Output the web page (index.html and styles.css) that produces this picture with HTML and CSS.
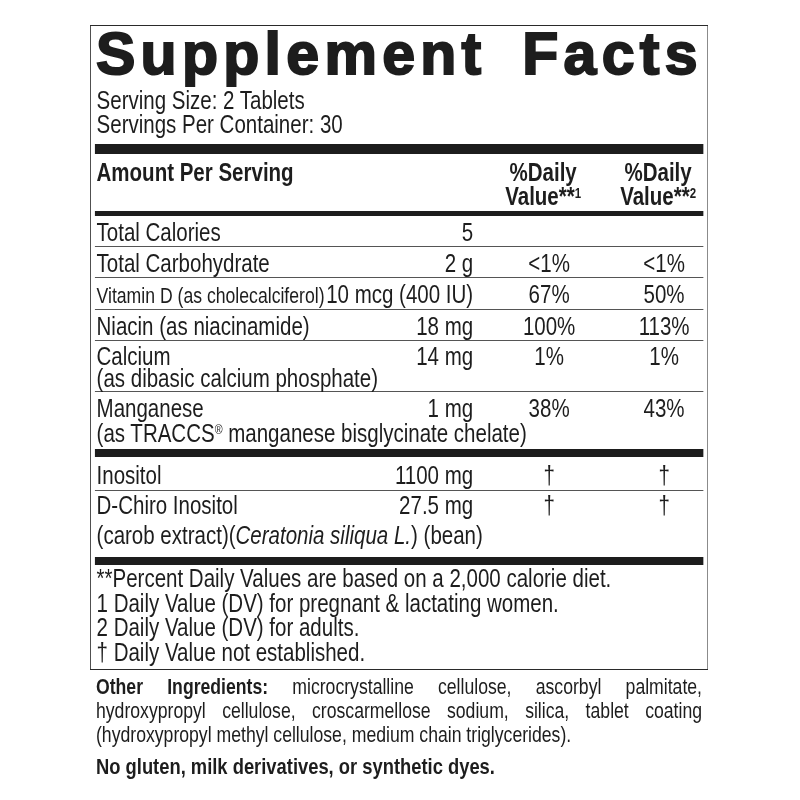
FILE: index.html
```html
<!DOCTYPE html>
<html lang="en">
<head>
<meta charset="utf-8">
<title>Supplement Facts</title>
<link rel="stylesheet" href="styles.css">
</head>
<body>
<div class="label">
  <div class="narrow">
    <div class="facts">
      <h1 class="title">Supplement Facts</h1>
      <div class="serving">Serving Size: 2 Tablets</div>
      <div class="serving">Servings Per Container: 30</div>
      <div class="bar bar-10"></div>
      <div class="row head">
        <div class="name">Amount Per Serving</div>
        <div class="amt"></div>
        <div class="dv">%Daily<br>Value**<sup>1</sup></div>
        <div class="dv">%Daily<br>Value**<sup>2</sup></div>
      </div>
      <div class="bar bar-5"></div>
      <div class="row">
        <div class="name">Total Calories</div>
        <div class="amt">5</div>
        <div class="dv"></div>
        <div class="dv"></div>
      </div>
      <div class="row">
        <div class="name">Total Carbohydrate</div>
        <div class="amt">2 g</div>
        <div class="dv">&lt;1%</div>
        <div class="dv">&lt;1%</div>
      </div>
      <div class="row">
        <div class="name small">Vitamin D (as cholecalciferol)</div>
        <div class="amt">10 mcg (400 IU)</div>
        <div class="dv">67%</div>
        <div class="dv">50%</div>
      </div>
      <div class="row">
        <div class="name">Niacin (as niacinamide)</div>
        <div class="amt">18 mg</div>
        <div class="dv">100%</div>
        <div class="dv">113%</div>
      </div>
      <div class="row calcium">
        <div class="name">Calcium</div>
        <div class="amt">14 mg</div>
        <div class="dv">1%</div>
        <div class="dv">1%</div>
        <div class="sub">(as dibasic calcium phosphate)</div>
      </div>
      <div class="row manganese">
        <div class="name">Manganese</div>
        <div class="amt">1 mg</div>
        <div class="dv">38%</div>
        <div class="dv">43%</div>
        <div class="sub">(as TRACCS<sup class="reg">®</sup> manganese bisglycinate chelate)</div>
      </div>
      <div class="bar bar-8"></div>
      <div class="row inositol">
        <div class="name">Inositol</div>
        <div class="amt">1100 mg</div>
        <div class="dv">†</div>
        <div class="dv">†</div>
      </div>
      <div class="row chiro">
        <div class="name">D-Chiro Inositol</div>
        <div class="amt">27.5 mg</div>
        <div class="dv">†</div>
        <div class="dv">†</div>
        <div class="sub">(carob extract)(<i>Ceratonia siliqua L.</i>) (bean)</div>
      </div>
      <div class="bar bar-8"></div>
      <div class="notes">
        <div>**Percent Daily Values are based on a 2,000 calorie diet.</div>
        <div>1 Daily Value (DV) for pregnant &amp; lactating women.</div>
        <div>2 Daily Value (DV) for adults.</div>
        <div>† Daily Value not established.</div>
      </div>
    </div>
    <p class="other"><b>Other Ingredients:</b> microcrystalline cellulose, ascorbyl palmitate, hydroxypropyl cellulose, croscarmellose sodium, silica, tablet coating (hydroxypropyl methyl cellulose, medium chain triglycerides).</p>
    <p class="free">No gluten, milk derivatives, or synthetic dyes.</p>
  </div>
</div>
</body>
</html>
```

FILE: styles.css
```css
* { box-sizing: border-box; }

html, body {
  margin: 0;
  padding: 0;
  background: #ffffff;
}

body {
  color: #1d1d1d;
  font-family: "Liberation Sans", Arial, Helvetica, sans-serif;
  font-size: 25px;
  line-height: 24px;
}

/* label block: 618px wide on screen */
.label {
  width: 618px;
  margin: 25px 0 0 90px;
}

/* condensed type (Helvetica Condensed look): whole block drawn at 82% width */
.narrow {
  width: 753.66px;
  transform: scaleX(0.82);
  transform-origin: 0 0;
}

.facts {
  border: 1px solid #2a2a2a;
  border-left-width: 1.3px;
  border-right-width: 1.3px;
  padding: 0 5px 5px 5px;
}

/* title keeps its full width */
.title {
  margin: -1px 0 4px 0;
  padding-left: 1px;
  font-weight: bold;
  font-size: 59px;
  line-height: 59px;
  letter-spacing: 5.3px;
  word-spacing: 14px;
  -webkit-text-stroke: 2px #1d1d1d;
  white-space: nowrap;
  transform: scaleX(1.2195);
  transform-origin: 0 0;
}

.serving {
  padding-left: 2px;
}

.bar {
  background: #1d1d1d;
}
.bar-10 { height: 10px; margin-top: 8px; }
.bar-8 { height: 8px; }
.bar-5 { height: 5px; }

.row {
  display: grid;
  grid-template-columns: 1fr auto 178px 102.4px;
  align-items: baseline;
  padding: 4px 0 2px 2px;
  border-bottom: 1px solid #555555;
}

.row .amt { text-align: right; white-space: nowrap; }
.row .dv { text-align: center; padding-left: 7.3px; }
.row .name { white-space: nowrap; }
.row .name.small { font-size: 21.5px; line-height: 21px; }

.row .sub {
  grid-column: 1 / -1;
  white-space: nowrap;
}

.head {
  font-weight: bold;
  padding: 6px 0 3px 2px;
  border-bottom: none;
  align-items: start;
}
.head .dv {
  padding-left: 0;
  padding-right: 7.3px;
}
.head sup, .row sup {
  font-size: 14px;
  line-height: 0;
  vertical-align: 7px;
}
.row sup.reg {
  font-size: 13px;
  vertical-align: 8px;
}

.calcium { padding: 3px 0 2px 2px; }
.calcium .sub { line-height: 21px; }

.manganese { padding: 4px 0 3px 2px; border-bottom: none; }
.manganese .sub { line-height: 26px; }

.inositol { padding: 6px 0 3px 2px; }

.chiro { padding: 2px 0 10px 2px; border-bottom: none; }
.chiro .sub { margin-top: 6px; }

.notes {
  padding: 1px 0 0 2px;
  line-height: 24.5px;
}

.other {
  margin: 5px 0 0 0;
  padding: 0 7.3px 0 7.3px;
  font-size: 21.5px;
  line-height: 24px;
  text-align: justify;
}

.free {
  margin: 8px 0 0 0;
  padding: 0 7.3px;
  font-size: 22.4px;
  font-weight: bold;
  line-height: 24px;
}
```
